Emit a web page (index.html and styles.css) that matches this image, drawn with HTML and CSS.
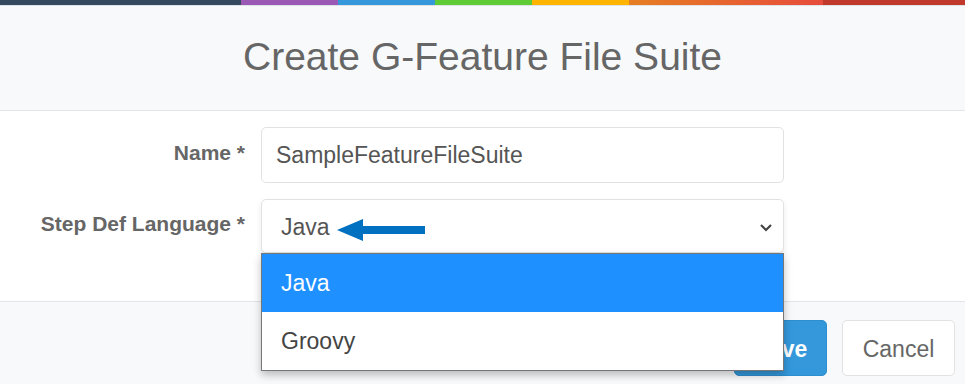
FILE: index.html
```html
<!DOCTYPE html>
<html lang="en">
<head>
<meta charset="UTF-8">
<meta name="viewport" content="width=device-width, initial-scale=1.0">
<title>Create G-Feature File Suite</title>
<link rel="stylesheet" href="styles.css">
</head>
<body>
<div class="modal">
    <div class="color-bar">
        <span class="seg navy"></span>
        <span class="seg purple"></span>
        <span class="seg blue"></span>
        <span class="seg green"></span>
        <span class="seg yellow"></span>
        <span class="seg orange"></span>
        <span class="seg red"></span>
    </div>
    <div class="modal-header">
        <h1 class="modal-title">Create G-Feature File Suite</h1>
    </div>
    <div class="modal-body">
        <div class="form-row">
            <label class="form-label">Name *</label>
            <div class="form-input">SampleFeatureFileSuite</div>
        </div>
        <div class="form-row">
            <label class="form-label">Step Def Language *</label>
            <div class="form-select">
                <span class="select-value">Java</span>
                <svg class="pointer" width="90" height="22" viewBox="0 0 90 22">
                    <polygon points="0,11 26,0 26,7 88,7 88,15 26,15 26,22" fill="#0070c0"/>
                </svg>
                <svg class="chevron" width="14" height="10" viewBox="0 0 14 10">
                    <polyline points="2,2 7,7 12,2" fill="none" stroke="#444" stroke-width="2.2"/>
                </svg>
                <ul class="dropdown">
                    <li class="option selected">Java</li>
                    <li class="option">Groovy</li>
                </ul>
            </div>
        </div>
    </div>
    <div class="modal-footer">
        <button class="btn btn-primary">Save</button>
        <button class="btn btn-default">Cancel</button>
    </div>
</div>
</body>
</html>
```

FILE: styles.css
```css
body {
    margin: 0;
    font-family: "Liberation Sans", Arial, sans-serif;
    background-color: #fff;
}
.modal {
    width: 965px;
    height: 384px;
    overflow: hidden;
    background-color: #f8f9fa;
}
.color-bar {
    display: flex;
    height: 5px;
    border-bottom: 1px solid #dfe3e8;
}
.seg {
    display: block;
    height: 100%;
}
.navy { width: 241px; background-color: #34495e; }
.purple { width: 97px; background-color: #9b59b6; }
.blue { width: 97px; background-color: #3498db; }
.green { width: 97px; background-color: #5fcb35; }
.yellow { width: 97px; background-color: #ffb400; }
.orange { width: 194px; background: linear-gradient(to right, #e67e22, #e74c3c); }
.red { flex: 1; background-color: #c0392b; }
.modal-header {
    height: 104px;
    display: flex;
    align-items: center;
    justify-content: center;
    border-bottom: 1px solid #e3e5e8;
    background-color: #f8f9fa;
}
.modal-title {
    margin: 0 0 2px 0;
    font-size: 39px;
    font-weight: normal;
    color: #666;
}
.modal-body {
    background-color: #fff;
    padding: 16px 0 48px 0;
    display: flex;
    flex-direction: column;
    gap: 16px;
    border-bottom: 1px solid #e3e5e8;
}
.form-row {
    display: flex;
    align-items: center;
    gap: 16px;
}
.form-label {
    width: 245px;
    text-align: right;
    font-size: 21px;
    font-weight: bold;
    color: #666;
    margin-bottom: 4px;
}
.form-input,
.form-select {
    box-sizing: border-box;
    width: 523px;
    border: 1px solid #e2e2e2;
    border-radius: 5px;
    background-color: #fff;
    font-size: 23px;
    color: #555;
    display: flex;
    align-items: center;
}
.form-input {
    height: 56px;
    padding-left: 14px;
}
.form-select {
    height: 54px;
    padding: 2px 0 0 19px;
    position: relative;
    box-shadow: 0 3px 6px rgba(0, 0, 0, 0.08);
}
.pointer {
    position: absolute;
    left: 75px;
    top: 19px;
}
.chevron {
    position: absolute;
    right: 10px;
    top: 23px;
}
.dropdown {
    position: absolute;
    left: -1px;
    top: 53px;
    width: 523px;
    box-sizing: border-box;
    margin: 0;
    padding: 0;
    list-style: none;
    background-color: #fff;
    border: 1px solid #777;
    box-shadow: 0 4px 8px rgba(0, 0, 0, 0.25);
    z-index: 2;
}
.option {
    height: 58px;
    line-height: 58px;
    padding-left: 19px;
    font-size: 23px;
    color: #444;
}
.option.selected {
    background-color: #1e90ff;
    color: #fff;
}
.modal-footer {
    display: flex;
    justify-content: flex-end;
    gap: 15px;
    padding: 18px 10px 0 0;
    background-color: #f8f9fa;
}
.btn {
    height: 56px;
    border-radius: 5px;
    font-family: "Liberation Sans", Arial, sans-serif;
    font-size: 23px;
    padding: 3px 0 0 0;
    cursor: pointer;
}
.btn-primary {
    width: 93px;
    background-color: #3498db;
    border: 1px solid #2e8ece;
    color: #fff;
    font-weight: bold;
}
.btn-default {
    width: 113px;
    background-color: #fff;
    border: 1px solid #e2e2e2;
    color: #666;
}
```
